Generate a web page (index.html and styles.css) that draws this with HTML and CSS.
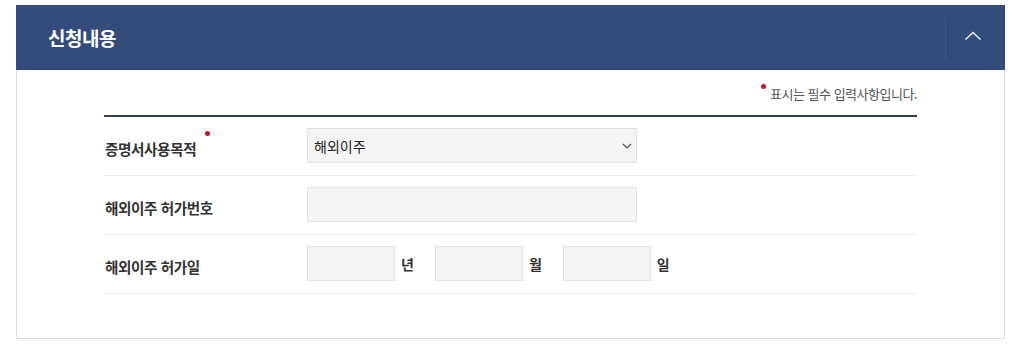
FILE: index.html
```html
<!DOCTYPE html>
<html lang="ko">
<head>
<meta charset="utf-8">
<link rel="stylesheet" href="styles.css">
</head>
<body>
<section class="panel">
  <header class="panel-head">
    <h2 class="panel-title">신청내용</h2>
    <div class="toggle">
      <svg width="18" height="10" viewBox="0 0 18 10"><path d="M1.5 8.5 L9 1.5 L16.5 8.5" fill="none" stroke="#e8edf5" stroke-width="1.6"/></svg>
    </div>
  </header>
  <div class="panel-body">
    <p class="note"><span class="dot"></span>표시는 필수 입력사항입니다.</p>
    <div class="form">
      <div class="row">
        <div class="label">증명서사용목적<span class="dot req"></span></div>
        <div class="field">
          <div class="select-wrap">
            <select class="select"><option>해외이주</option></select>
            <svg class="caret" width="10" height="6" viewBox="0 0 10 6"><path d="M1 1 L5 5 L9 1" fill="none" stroke="#555" stroke-width="1.2"/></svg>
          </div>
        </div>
      </div>
      <div class="row">
        <div class="label">해외이주 허가번호</div>
        <div class="field"><input class="input wide" type="text"></div>
      </div>
      <div class="row">
        <div class="label">해외이주 허가일</div>
        <div class="field date">
          <input class="input short" type="text"><span class="unit">년</span>
          <input class="input short" type="text"><span class="unit">월</span>
          <input class="input short" type="text"><span class="unit">일</span>
        </div>
      </div>
    </div>
  </div>
</section>
</body>
</html>
```

FILE: styles.css
```css
* { box-sizing: border-box; }
html, body { margin: 0; padding: 0; background: #fff; }
body {
  font-family: "Noto Sans CJK KR", "Noto Sans", sans-serif;
  color: #333;
  padding: 5px 19px 0 16px;
}
.panel {
  width: 989px;
  border: 1px solid #dcdcdc;
  border-top: none;
  height: 334px;
}
.panel-head {
  height: 65px;
  background: #334c7b;
  margin: 0 -1px;
  display: flex;
  align-items: center;
  justify-content: space-between;
}
.panel-title {
  margin: 0 0 0 32px;
  font-size: 19px;
  font-weight: 700;
  color: #fff;
  letter-spacing: -0.5px;
}
.toggle {
  width: 60px;
  height: 42px;
  border-left: 1px solid #41598a;
  display: flex;
  align-items: center;
  justify-content: center;
}
.toggle svg { display: block; margin-top: -3px; margin-left: -6px; }
.panel-body {
  padding: 0 87px 0 87px;
}
.note {
  margin: 0;
  padding: 14px 0 11px;
  text-align: right;
  font-size: 13px;
  line-height: 20px;
  color: #555;
  letter-spacing: -0.5px;
}
.dot {
  display: inline-block;
  width: 5px;
  height: 5px;
  border-radius: 50%;
  background: #d0112b;
  vertical-align: top;
  margin-top: 0px;
  margin-right: 4px;
}
.form { border-top: 2px solid #333d4c; }
.row {
  display: flex;
  align-items: center;
  padding: 11px 0 12px;
  border-bottom: 1px solid #ececec;
}
.label {
  width: 203px;
  padding-left: 1px;
  font-size: 14.6px;
  font-weight: 700;
  color: #333;
  letter-spacing: -0.4px;
  align-self: center;
  padding-top: 6px;
}
.dot.req { margin: -7px 0 0 9px; }
.field { display: flex; align-items: center; }
.select-wrap { position: relative; }
.select {
  appearance: none;
  -webkit-appearance: none;
  width: 330px;
  height: 35px;
  background: #f4f4f4;
  border: 1px solid #e3e3e3;
  border-radius: 0;
  padding: 0 0 0 6px;
  font-family: inherit;
  font-size: 14px;
  color: #222;
  outline: none;
}
.caret { position: absolute; right: 5px; top: 15px; }
.input {
  height: 35px;
  background: #f4f4f4;
  border: 1px solid #e3e3e3;
  border-radius: 0;
  outline: none;
  padding: 0 6px;
  font-family: inherit;
}
.wide { width: 330px; }
.short { width: 88px; }
.unit {
  font-size: 14px;
  font-weight: 700;
  color: #333;
  margin: 0 21px 0 6px;
}
```
